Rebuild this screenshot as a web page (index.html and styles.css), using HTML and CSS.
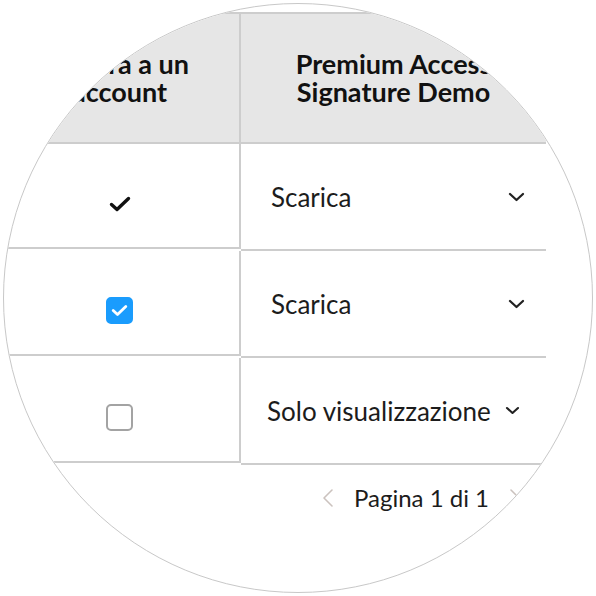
FILE: index.html
```html
<!DOCTYPE html>
<html lang="it">
<head>
<meta charset="utf-8">
<link rel="stylesheet" href="styles.css">
</head>
<body>
<div class="lens">
  <div class="table">
    <div class="cell head first">Separa a un account</div>
    <div class="cell head">Premium Access Signature Demo</div>

    <div class="cell first check-cell">
      <svg class="tick" width="22" height="18" viewBox="0 0 22 18"><path d="M2.5 9.5 L8 14.5 L19.5 3.5" fill="none" stroke="#111" stroke-width="3.4" stroke-linecap="round" stroke-linejoin="round"/></svg>
    </div>
    <div class="cell sel-cell">
      <div class="select"><span>Scarica</span><svg width="17" height="10" viewBox="0 0 17 10"><path d="M2 2 L8.5 8 L15 2" fill="none" stroke="#222" stroke-width="2.3" stroke-linecap="round" stroke-linejoin="round"/></svg></div>
    </div>

    <div class="cell first check-cell">
      <span class="box on"><svg width="17" height="13" viewBox="0 0 17 13"><path d="M2.2 6.5 L6.5 10.5 L14.8 2.5" fill="none" stroke="#fff" stroke-width="2.8" stroke-linecap="round" stroke-linejoin="round"/></svg></span>
    </div>
    <div class="cell sel-cell">
      <div class="select"><span>Scarica</span><svg width="17" height="10" viewBox="0 0 17 10"><path d="M2 2 L8.5 8 L15 2" fill="none" stroke="#222" stroke-width="2.3" stroke-linecap="round" stroke-linejoin="round"/></svg></div>
    </div>

    <div class="cell first check-cell">
      <span class="box"></span>
    </div>
    <div class="cell sel-cell">
      <div class="select wide"><span>Solo visualizzazione</span><svg width="15" height="9" viewBox="0 0 15 9"><path d="M2 2 L7.5 7 L13 2" fill="none" stroke="#222" stroke-width="2.1" stroke-linecap="round" stroke-linejoin="round"/></svg></div>
    </div>
  </div>
  <div class="pager">
    <svg class="arrow" width="12" height="20" viewBox="0 0 12 20"><path d="M10 2 L2 10 L10 18" fill="none" stroke="#cbc2be" stroke-width="1.6" stroke-linecap="round" stroke-linejoin="round"/></svg>
    <span class="page-label">Pagina 1 di 1</span>
    <svg class="arrow" width="12" height="20" viewBox="0 0 12 20"><path d="M2 2 L10 10 L2 18" fill="none" stroke="#cbc2be" stroke-width="1.6" stroke-linecap="round" stroke-linejoin="round"/></svg>
  </div>
</div>
</body>
</html>
```
FILE: styles.css
```css
html, body {
  margin: 0;
  padding: 0;
  background: #fff;
}
body {
  width: 596px;
  height: 596px;
  overflow: hidden;
  font-family: Lato, "Noto Sans", sans-serif;
  color: #1c1c1c;
}
.lens {
  margin: 3px;
  width: 590px;
  height: 590px;
  box-sizing: border-box;
  border: 1px solid #c8c8c8;
  border-radius: 50%;
  overflow: hidden;
  background: #fff;
}
.table {
  margin: 8px 0 0 -4px;
  width: 546px;
  display: grid;
  grid-template-columns: 241px 305px;
  border-top: 2px solid #cdcdcd;
}
.cell {
  border-bottom: 2px solid #cdcdcd;
  height: 105px;
  display: flex;
  align-items: center;
  justify-content: center;
}
.cell.first {
  border-right: 2px solid #cdcdcd;
}
.cell.head {
  height: 130px;
  background: #e6e6e6;
  font-weight: 700;
  font-size: 27px;
  line-height: 28px;
  text-align: center;
  padding: 0 38px;
  box-sizing: border-box;
  color: #111;
}
.cell.head.first {
  padding: 0 45px;
}
.check-cell {
  padding-top: 16px;
  box-sizing: border-box;
}
.box {
  width: 23px;
  height: 23px;
  border: 2px solid #a3a3a3;
  border-radius: 5px;
  display: flex;
  align-items: center;
  justify-content: center;
}
.box.on {
  background: #1a9cfd;
  border-color: #1a9cfd;
}
.sel-cell {
  justify-content: flex-start;
}
.select {
  margin-left: 30px;
  width: 254px;
  display: flex;
  align-items: center;
  justify-content: space-between;
  font-size: 26px;
}
.select.wide {
  margin-left: 26px;
  width: 253px;
}
.pager {
  margin: 18px 0 0 0;
  padding-left: 318px;
  display: flex;
  align-items: center;
  gap: 20px;
}
.page-label {
  font-size: 24px;
}
```
